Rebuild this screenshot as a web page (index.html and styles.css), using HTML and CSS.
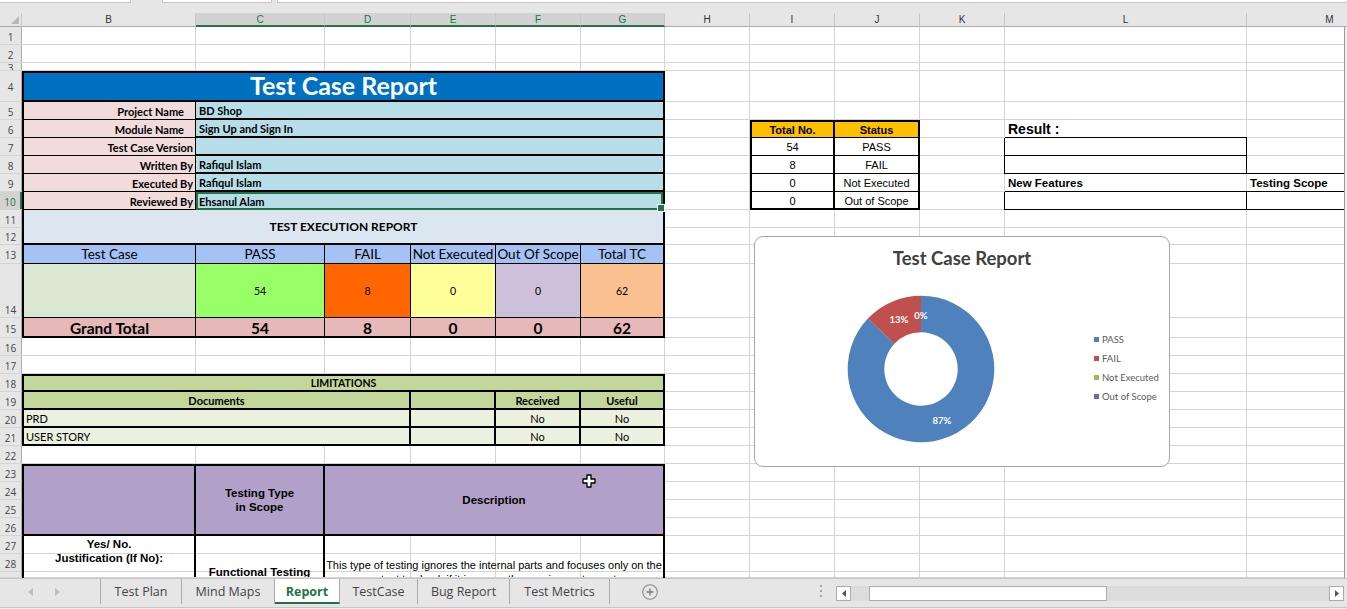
FILE: index.html
```html
<!DOCTYPE html>
<html lang="en">
<head>
<meta charset="utf-8">
<title>Test Case Report</title>
<link rel="stylesheet" href="styles.css">
</head>
<body>
<div class="app">
  <div class="topstrip"><span class="fb fb1"></span><span class="fb fb2"></span><span class="fb fb3"></span></div>

  <div class="colheads">
    <div class="corner"><svg width="8" height="8" viewBox="0 0 8 8"><path d="M8 0 L8 8 L0 8 Z" fill="#b8b8b8"/></svg></div>
    <div class="ch w-b">B</div>
    <div class="ch w-c sel">C</div>
    <div class="ch w-d sel">D</div>
    <div class="ch w-e sel">E</div>
    <div class="ch w-f sel">F</div>
    <div class="ch w-g sel">G</div>
    <div class="ch w-h">H</div>
    <div class="ch w-i">I</div>
    <div class="ch w-j">J</div>
    <div class="ch w-k">K</div>
    <div class="ch w-l">L</div>
    <div class="ch w-m">M</div>
  </div>

  <div class="sheetwrap">
    <div class="sheet">
      <div class="layer rows">
        <div class="row h18"><span class="rh">1</span></div>
        <div class="row h18"><span class="rh">2</span></div>
        <div class="row h8"><span class="rh">3</span></div>
        <div class="row h31"><span class="rh">4</span></div>
        <div class="row h18"><span class="rh">5</span></div>
        <div class="row h18"><span class="rh">6</span></div>
        <div class="row h18"><span class="rh">7</span></div>
        <div class="row h18"><span class="rh">8</span></div>
        <div class="row h18"><span class="rh">9</span></div>
        <div class="row h18"><span class="rh rh-sel">10</span></div>
        <div class="row h18"><span class="rh">11</span></div>
        <div class="row h17"><span class="rh">12</span></div>
        <div class="row h19"><span class="rh">13</span></div>
        <div class="row h54"><span class="rh rh-bottom">14</span></div>
        <div class="row h20"><span class="rh">15</span></div>
        <div class="row h18"><span class="rh">16</span></div>
        <div class="row h18"><span class="rh">17</span></div>
        <div class="row h18"><span class="rh">18</span></div>
        <div class="row h18"><span class="rh">19</span></div>
        <div class="row h18"><span class="rh">20</span></div>
        <div class="row h18"><span class="rh">21</span></div>
        <div class="row h18"><span class="rh">22</span></div>
        <div class="row h18"><span class="rh">23</span></div>
        <div class="row h18"><span class="rh">24</span></div>
        <div class="row h18"><span class="rh">25</span></div>
        <div class="row h18"><span class="rh">26</span></div>
        <div class="row h18"><span class="rh">27</span></div>
        <div class="row h18"><span class="rh">28</span></div>
        <div class="row h6"><span class="rh"></span></div>
      </div>

      <div class="layer cols">
        <div class="w-rh"></div>
        <div class="gc w-b"></div>
        <div class="gc w-c"></div>
        <div class="gc w-d"></div>
        <div class="gc w-e"></div>
        <div class="gc w-f"></div>
        <div class="gc w-g"></div>
        <div class="gc w-h"></div>
        <div class="gc w-i"></div>
        <div class="gc w-j"></div>
        <div class="gc w-k"></div>
        <div class="gc w-l"></div>
        <div class="gc w-m"></div>
      </div>

      <div class="layer cells">
        <div class="report">
          <div class="title">Test Case Report</div>
          <div class="lbl ind">Project Name</div><div class="val">BD Shop</div>
          <div class="lbl ind">Module Name</div><div class="val">Sign Up and Sign In</div>
          <div class="lbl">Test Case Version</div><div class="val"></div>
          <div class="lbl">Written By</div><div class="val">Rafiqul Islam</div>
          <div class="lbl">Executed By</div><div class="val">Rafiqul Islam</div>
          <div class="lbl">Reviewed By</div><div class="val sel">Ehsanul Alam</div>
          <div class="exec">TEST EXECUTION REPORT</div>
          <div class="th">Test Case</div>
          <div class="th">PASS</div>
          <div class="th">FAIL</div>
          <div class="th">Not Executed</div>
          <div class="th">Out Of Scope</div>
          <div class="th last">Total TC</div>
          <div class="tv c-tc"></div>
          <div class="tv c-pass">54</div>
          <div class="tv c-fail">8</div>
          <div class="tv c-ne">0</div>
          <div class="tv c-os">0</div>
          <div class="tv c-tot last">62</div>
          <div class="gt">Grand Total</div>
          <div class="gt">54</div>
          <div class="gt">8</div>
          <div class="gt">0</div>
          <div class="gt">0</div>
          <div class="gt last">62</div>
        </div>

        <div class="limits">
          <div class="lim-title">LIMITATIONS</div>
          <div class="lh">Documents</div>
          <div class="lh"></div>
          <div class="lh">Received</div>
          <div class="lh last">Useful</div>
          <div class="ld left">PRD</div>
          <div class="ld"></div>
          <div class="ld">No</div>
          <div class="ld last">No</div>
          <div class="ld left end">USER STORY</div>
          <div class="ld end"></div>
          <div class="ld end">No</div>
          <div class="ld last end">No</div>
        </div>

        <div class="scope">
          <div class="sh"></div>
          <div class="sh">Testing Type<br>in Scope</div>
          <div class="sh last">Description</div>
          <div class="sd sd-just">Yes/ No.<br>Justification (If No):</div>
          <div class="sd sd-type">Functional Testing</div>
          <div class="sd sd-desc last">This type of testing ignores the internal parts and focuses only on the<br>output to check if it is as per the requirement or not.</div>
        </div>

        <div class="status">
          <div class="sth">Total No.</div><div class="sth last">Status</div>
          <div class="std">54</div><div class="std last">PASS</div>
          <div class="std">8</div><div class="std last">FAIL</div>
          <div class="std">0</div><div class="std last">Not Executed</div>
          <div class="std end">0</div><div class="std last end">Out of Scope</div>
        </div>

        <div class="result">
          <div class="rcell rtitle">Result :</div><div class="rcell"></div>
          <div class="rcell lbox">&nbsp;</div><div class="rcell"></div>
          <div class="rcell lbox">&nbsp;</div><div class="rcell ul"></div>
          <div class="rcell rlabel ul">New Features</div><div class="rcell rlabel ul">Testing Scope</div>
          <div class="rcell lbox">&nbsp;</div><div class="rcell ul"></div>
        </div>
      </div>

      <div class="chart">
        <div class="ctitle">Test Case Report</div>
        <div class="cbody">
          <svg class="donut" width="150" height="150" viewBox="0 0 150 150">
            <path d="M75 1.7 A73.3 73.3 0 1 1 21.83 24.54 L48.38 49.74 A36.7 36.7 0 1 0 75 38.3 Z" fill="#4f81bd"/>
            <path d="M21.83 24.54 A73.3 73.3 0 0 1 75 1.7 L75 38.3 A36.7 36.7 0 0 0 48.38 49.74 Z" fill="#c0504d"/>
            <text x="96" y="126" class="plabel">87%</text>
            <text x="53" y="25" class="plabel">13%</text>
            <text x="75" y="21" class="plabel">0%</text>
          </svg>
          <div class="legend">
            <div class="li"><span class="sw sw-pass"></span>PASS</div>
            <div class="li"><span class="sw sw-fail"></span>FAIL</div>
            <div class="li"><span class="sw sw-ne"></span>Not Executed</div>
            <div class="li"><span class="sw sw-os"></span>Out of Scope</div>
          </div>
        </div>
      </div>

      <div class="cursor">
        <svg width="14" height="14" viewBox="0 0 14 14"><path d="M5 1 H9 V5 H13 V9 H9 V13 H5 V9 H1 V5 H5 Z" fill="#fff" stroke="#000" stroke-width="1.3" stroke-linejoin="round"/></svg>
      </div>
    </div>
    <div class="vedge"></div>
  </div>

  <div class="tabbar">
    <div class="nav">
      <svg class="navl" width="5" height="8" viewBox="0 0 5 8"><path d="M5 0 L0 4 L5 8 Z" fill="#bdbdbd"/></svg>
      <svg class="navr" width="5" height="8" viewBox="0 0 5 8"><path d="M0 0 L5 4 L0 8 Z" fill="#bdbdbd"/></svg>
    </div>
    <div class="tab t1">Test Plan</div>
    <div class="tab t2">Mind Maps</div>
    <div class="tab t3 active">Report</div>
    <div class="tab t4">TestCase</div>
    <div class="tab t5">Bug Report</div>
    <div class="tab t6">Test Metrics</div>
    <div class="addsheet"><svg width="16" height="16" viewBox="0 0 16 16"><circle cx="8" cy="8" r="7.3" fill="none" stroke="#8c8c8c" stroke-width="1.1"/><path d="M8 4.5 V11.5 M4.5 8 H11.5" stroke="#7a7a7a" stroke-width="1.3"/></svg></div>
    <div class="dots"><span></span><span></span><span></span></div>
    <div class="scroll">
      <div class="sbtn"><svg width="4" height="7" viewBox="0 0 4 7"><path d="M4 0 L0 3.5 L4 7 Z" fill="#555"/></svg></div>
      <div class="track"><div class="thumb"></div></div>
      <div class="sbtn"><svg width="4" height="7" viewBox="0 0 4 7"><path d="M0 0 L4 3.5 L0 7 Z" fill="#555"/></svg></div>
    </div>
  </div>
  <div class="foot"></div>
</div>
</body>
</html>
```

FILE: styles.css
```css
* { box-sizing: border-box; margin: 0; padding: 0; }
html, body { width: 1347px; height: 609px; overflow: hidden; background: #fff; }
body { font-family: Lato, "Liberation Sans", sans-serif; color: #000; }

.app { width: 1347px; height: 609px; display: flex; flex-direction: column; overflow: hidden; }

/* top strip (formula bar edge) */
.topstrip { height: 13px; flex-shrink: 0; background: #e6e6e6; display: flex; align-items: flex-start; }
.fb { height: 3px; background: #fff; border: 1px solid #c6c6c6; border-top: none; }
.fb1 { width: 131px; border-left: none; }
.fb2 { width: 110px; margin-left: 31px; }
.fb3 { flex: 1; margin-left: 5px; border-right: none; }

/* widths */
.w-rh { width: 22px; flex-shrink: 0; }
.w-b { width: 174px; }
.w-c { width: 129px; }
.w-d { width: 86px; }
.w-e { width: 85px; }
.w-f { width: 85px; }
.w-g { width: 84px; }
.w-h { width: 85px; }
.w-i { width: 85px; }
.w-j { width: 85px; }
.w-k { width: 85px; }
.w-l { width: 242px; }
.w-m { width: 166px; }

/* column headers */
.colheads { height: 14px; flex-shrink: 0; display: flex; background: #e6e6e6; }
.corner { width: 22px; flex-shrink: 0; border-right: 1px solid #c8c8c8; border-bottom: 1px solid #ababab; display: flex; align-items: flex-end; justify-content: flex-end; padding: 0 2px 2px 0; }
.ch { flex-shrink: 0; border-right: 1px solid #c8c8c8; border-bottom: 1px solid #ababab; font-family: "Liberation Sans", sans-serif; font-size: 10px; line-height: 13px; color: #333; text-align: center; }
.ch.sel { background: #d2d2d2; color: #217346; border-bottom: 2px solid #217346; }

/* sheet */
.sheetwrap { height: 551px; flex-shrink: 0; display: flex; }
.sheet { width: 1344px; height: 551px; flex-shrink: 0; overflow: hidden; position: relative; display: grid; grid-template-columns: 1413px; grid-template-rows: 551px; }
.layer { grid-area: 1 / 1; }
.vedge { flex: 1; border-left: 1px solid #9b9b9b; background: #f0f0f0; }

.rows { display: flex; flex-direction: column; }
.row { display: flex; border-bottom: 1px solid #d4d4d4; flex-shrink: 0; }
.h6 { height: 6px; } .h8 { height: 8px; } .h17 { height: 17px; } .h18 { height: 18px; } .h19 { height: 19px; }
.h20 { height: 20px; } .h31 { height: 31px; } .h54 { height: 54px; }
.rh { width: 22px; flex-shrink: 0; background: #e6e6e6; border-right: 1px solid #ababab; display: flex; align-items: center; justify-content: center; font-family: "Open Sans", sans-serif; font-size: 10px; color: #444; overflow: hidden; padding-top: 2px; }
.rh-bottom { align-items: flex-end; padding-bottom: 0; }
.rh-sel { background: #d2d2d2; color: #217346; border-right: 2px solid #217346; }

.cols { display: flex; }
.gc { flex-shrink: 0; border-right: 1px solid #d4d4d4; }

.cells { display: grid; grid-template-columns: 22px 174px 129px 86px 85px 85px 84px 85px 85px 85px 85px 242px 166px; grid-template-rows: 18px 18px 8px 31px repeat(7, 18px) 17px 19px 54px 20px repeat(13, 18px) 6px; }

/* report block */
.report { grid-column: 2 / 8; grid-row: 4 / 16; border: 2px solid #000; display: grid; grid-template-columns: 172px 129px 86px 85px 85px 82px; grid-template-rows: 29px repeat(6, 18px) 35px 19px 54px 18px; }
.title { grid-column: 1 / -1; background: #0070c0; border-bottom: 2px solid #000; color: #fff; font-weight: 700; font-size: 25px; display: flex; align-items: center; justify-content: center; padding-bottom: 3px; }
.lbl { background: #f2dcdb; border-bottom: 1px solid #000; border-right: 1px solid #000; font-weight: 700; font-size: 11px; display: flex; align-items: center; justify-content: flex-end; padding-right: 2px; padding-top: 1px; white-space: nowrap; }
.lbl.ind { padding-right: 11px; }
.val { grid-column: 2 / -1; background: #b7dee8; border-bottom: 2px solid #000; font-weight: 700; font-size: 11px; display: flex; align-items: center; padding-left: 3px; }
.val.sel { border: 2px solid #217346; position: relative; z-index: 2; padding-left: 1px; }
.val.sel::after { content: ""; position: absolute; right: -4px; bottom: -4px; width: 6px; height: 6px; background: #217346; border: 1px solid #fff; }
.exec { grid-column: 1 / -1; background: #dce6f1; border-bottom: 2px solid #000; font-weight: 700; font-size: 12px; display: flex; align-items: center; justify-content: center; }
.th { background: #a4c2f4; border-right: 1px solid #000; border-bottom: 1px solid #000; font-weight: 400; font-size: 13.5px; display: flex; align-items: center; justify-content: center; white-space: nowrap; }
.tv { border-right: 1px solid #000; border-bottom: 1px solid #000; font-size: 10.5px; display: flex; align-items: center; justify-content: center; }
.c-tc { background: #d9e7d3; }
.c-pass { background: #99ff66; }
.c-fail { background: #ff6600; }
.c-ne { background: #ffff99; }
.c-os { background: #ccc0da; }
.c-tot { background: #fac090; }
.gt { background: #e6b8b7; border-right: 1px solid #000; font-weight: 700; font-size: 15.5px; display: flex; align-items: center; justify-content: center; padding-top: 1px; }
.report .last { border-right: none; }

/* limitations */
.limits { grid-column: 2 / 8; grid-row: 18 / 22; border: 2px solid #000; display: grid; grid-template-columns: 387px 85px 85px 82px; grid-template-rows: 16px 18px 18px 16px; }
.lim-title { grid-column: 1 / -1; background: #c4d79b; border-bottom: 2px solid #000; font-weight: 700; font-size: 10.5px; display: flex; align-items: center; justify-content: center; }
.lh { background: #c4d79b; border-right: 2px solid #000; border-bottom: 2px solid #000; font-weight: 700; font-size: 11px; display: flex; align-items: center; justify-content: center; }
.ld { background: #ebf1de; border-right: 2px solid #000; border-bottom: 2px solid #000; font-size: 11px; display: flex; align-items: center; justify-content: center; }
.ld.left { justify-content: flex-start; padding-left: 2px; }
.ld.end { border-bottom: none; }
.limits .last { border-right: none; }

/* scope */
.scope { grid-column: 2 / 8; grid-row: 23 / 30; border: 2px solid #000; border-bottom: none; display: grid; grid-template-columns: 172px 129px 338px; grid-template-rows: 70px 41px; font-family: "Liberation Sans", Arial, sans-serif; }
.sh { background: #b1a0c7; border-right: 2px solid #000; border-bottom: 2px solid #000; font-weight: 700; font-size: 11.5px; line-height: 14px; display: flex; align-items: center; justify-content: center; text-align: center; }
.sd { border-right: 2px solid #000; font-size: 11px; line-height: 14px; text-align: center; white-space: nowrap; overflow: hidden; }
.sd-just { font-weight: 700; font-size: 11.5px; padding-top: 1px; }
.sd-type { font-weight: 700; font-size: 11.5px; padding-top: 29px; }
.sd-desc { padding-top: 22px; }
.scope .last { border-right: none; }

/* status table */
.status { grid-column: 9 / 11; grid-row: 6 / 11; border: 2px solid #000; display: grid; grid-template-columns: 83px 83px; grid-template-rows: 16px 18px 18px 18px 16px; font-family: "Liberation Sans", Arial, sans-serif; }
.sth { background: #ffc000; border-right: 2px solid #000; border-bottom: 1px solid #000; font-weight: 700; font-size: 11px; display: flex; align-items: center; justify-content: center; padding-top: 1px; }
.std { background: #fff; border-right: 2px solid #000; border-bottom: 1px solid #000; font-size: 11px; display: flex; align-items: center; justify-content: center; padding-top: 1px; }
.std.end { border-bottom: none; }
.status .last { border-right: none; }

/* result */
.result { grid-column: 12 / 14; grid-row: 6 / 11; display: grid; grid-template-columns: 242px 166px; grid-template-rows: repeat(5, 18px); font-family: "Liberation Sans", Arial, sans-serif; }
.rcell { display: flex; align-items: center; white-space: nowrap; }
.rtitle { font-weight: 700; font-size: 14px; padding-left: 3px; border-bottom: 1px solid #000; padding-top: 1px; }
.lbox { margin-left: -1px; border-left: 1px solid #000; border-right: 1px solid #000; border-bottom: 1px solid #000; background: #fff; }
.ul { border-bottom: 1px solid #000; }
.rlabel { font-weight: 700; font-size: 11.5px; padding-left: 3px; padding-top: 1px; }

/* chart */
.chart { position: absolute; left: 754px; top: 209px; width: 416px; height: 231px; border: 1px solid #a6a6a6; border-radius: 9px; background: #fff; z-index: 3; }
.ctitle { padding-top: 11px; height: 31px; line-height: 20px; text-align: center; font-weight: 700; font-size: 18.5px; color: #404040; }
.cbody { display: flex; align-items: flex-start; margin-top: 26px; }
.donut { margin-left: 91px; flex-shrink: 0; }
.plabel { font-family: Lato, sans-serif; font-weight: 700; font-size: 9.5px; fill: #fff; text-anchor: middle; dominant-baseline: central; }
.legend { margin-left: 98px; margin-top: 36px; }
.li { height: 19px; display: flex; align-items: center; font-size: 9.5px; color: #595959; white-space: nowrap; }
.sw { width: 5px; height: 5px; margin-right: 3px; flex-shrink: 0; }
.sw-pass { background: #4f81bd; }
.sw-fail { background: #c0504d; }
.sw-ne { background: #9bbb59; }
.sw-os { background: #8064a2; }

.cursor { position: absolute; left: 582px; top: 447px; width: 14px; height: 14px; z-index: 4; }
.cursor svg { display: block; }

/* tab bar */
.tabbar { height: 30px; flex-shrink: 0; border-top: 1px solid #c6c6c6; border-bottom: 1px solid #c6c6c6; background: #e6e6e6; display: flex; align-items: flex-start; font-family: "Open Sans", sans-serif; }
.nav { width: 101px; height: 25px; flex-shrink: 0; border-right: 1px solid #ababab; display: flex; align-items: center; }
.navl { margin-left: 28px; }
.navr { margin-left: 22px; }
.tab { height: 25px; flex-shrink: 0; border-right: 1px solid #ababab; display: flex; align-items: center; justify-content: center; font-size: 12.5px; color: #444; white-space: nowrap; }
.t1 { width: 81px; } .t2 { width: 93px; } .t3 { width: 65px; } .t4 { width: 78px; } .t5 { width: 92px; } .t6 { width: 100px; }
.tab.active { background: #fff; color: #217346; font-weight: 700; border-bottom: 2px solid #217346; padding-top: 2px; }
.addsheet { margin-left: 32px; margin-top: 5px; width: 16px; height: 16px; }
.addsheet svg { display: block; }
.dots { margin-left: 162px; margin-top: 6px; width: 2px; display: flex; flex-direction: column; gap: 3px; }
.dots span { width: 2px; height: 2px; background: #a6a6a6; }
.scroll { margin-left: 14px; margin-top: 7px; height: 15px; display: flex; }
.sbtn { width: 15px; height: 15px; background: #fff; border: 1px solid #ababab; display: flex; align-items: center; justify-content: center; flex-shrink: 0; }
.track { width: 478px; height: 15px; background: #dcdcdc; display: flex; }
.thumb { margin-left: 18px; width: 238px; height: 15px; background: #fff; border: 1px solid #ababab; }
.foot { flex: 1; background: #f0f0f0; }
```
